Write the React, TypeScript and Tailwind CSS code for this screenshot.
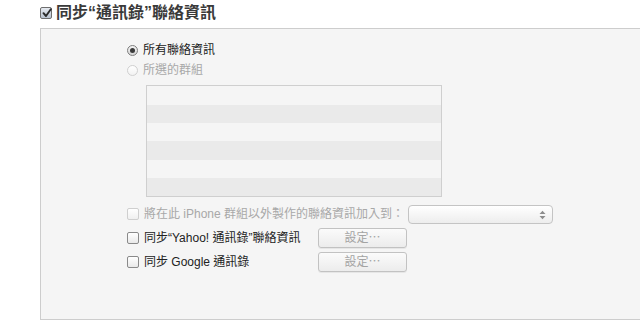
import React from "react";

const FONT = "font-['Liberation_Sans','Noto_Sans_CJK_TC',sans-serif]";

function CheckBox({ checked = false, disabled = false }: { checked?: boolean; disabled?: boolean }) {
  return (
    <span
      className={
        "relative inline-flex h-[12px] w-[12px] shrink-0 items-center justify-center rounded-[2px] border " +
        (disabled
          ? "border-[#cfcfcf] bg-gradient-to-b from-white to-[#f0f0f0]"
          : checked
          ? "border-[#6e6e6e] bg-gradient-to-b from-[#e6eaf0] to-[#b9c2cf]"
          : "border-[#8a8a8a] bg-gradient-to-b from-white to-[#e9e9e9]")
      }
    >
      {checked && (
        <svg width="10" height="10" viewBox="0 0 10 10" className="absolute left-[1px] top-[0px]">
          <path d="M1.5 5.2 L4 8 L8.8 1.2" fill="none" stroke="#2a2a2a" strokeWidth="1.9" strokeLinecap="round" strokeLinejoin="round" />
        </svg>
      )}
    </span>
  );
}

function Radio({ selected = false, disabled = false }: { selected?: boolean; disabled?: boolean }) {
  return (
    <span
      className={
        "inline-flex h-[11px] w-[11px] shrink-0 items-center justify-center rounded-full border " +
        (disabled
          ? "border-[#d0d0d0] bg-gradient-to-b from-white to-[#f2f2f2]"
          : "border-[#7d7d7d] bg-gradient-to-b from-[#f4f4f4] to-[#d5d5d5]")
      }
    >
      {selected && <span className="h-[5px] w-[5px] rounded-full bg-[#3a3a3a]" />}
    </span>
  );
}

function SetupButton() {
  return (
    <button className="flex h-[20px] w-[89px] items-center justify-center rounded-[3px] border border-[#c2c2c2] bg-gradient-to-b from-[#fbfbfb] to-[#ececec] text-[12px] text-[#a3a3a3] shadow-[0_1px_0_rgba(0,0,0,0.06)]">
      設定⋯
    </button>
  );
}

export default function App() {
  const rows = [19, 18, 18, 19, 18, 18];

  return (
    <div className={"h-[325px] w-[640px] overflow-hidden bg-white " + FONT}>
      {/* Section title */}
      <div className="flex h-[28px] items-center gap-[4px] pb-[3px] pl-[40px]">
        <CheckBox checked />
        <span className="text-[16px] font-bold leading-none text-[#3a3a3a]">同步“通訊錄”聯絡資訊</span>
      </div>

      {/* Panel */}
      <div className="ml-[40px] h-[292px] w-[610px] border border-r-0 border-[#cdcdcd] bg-[#f5f5f5] pl-[86px] pt-[11px]">
        <div className="flex h-[20px] items-center gap-[5px]">
          <Radio selected />
          <span className="text-[12px] text-[#222]">所有聯絡資訊</span>
        </div>
        <div className="flex h-[20px] items-center gap-[5px]">
          <Radio disabled />
          <span className="text-[12px] text-[#a8a8a8]">所選的群組</span>
        </div>

        {/* Group list */}
        <div className="ml-[19px] mt-[5px] w-[296px] border border-[#cfcfcf]">
          {rows.map((h, i) => (
            <div
              key={i}
              className={i % 2 === 0 ? "bg-[#f5f5f5]" : "bg-[#eaeaea]"}
              style={{ height: h }}
            />
          ))}
        </div>

        <div className="mt-[7px] flex h-[20px] items-center">
          <CheckBox disabled />
          <span className="ml-[5px] w-[264px] text-[12px] text-[#a8a8a8]">將在此 iPhone 群組以外製作的聯絡資訊加入到：</span>
          <div className="relative h-[19px] w-[145px] rounded-[4px] border border-[#c4c4c4] bg-gradient-to-b from-white to-[#ededed]">
            <svg width="7" height="10" viewBox="0 0 7 10" className="absolute right-[6px] top-[4px]">
              <path d="M0.5 4 L3.5 0.8 L6.5 4 Z" fill="#8c8c8c" />
              <path d="M0.5 6 L3.5 9.2 L6.5 6 Z" fill="#8c8c8c" />
            </svg>
          </div>
        </div>

        <div className="mt-[4px] flex h-[20px] items-center">
          <CheckBox />
          <span className="ml-[5px] w-[174px] text-[12px] text-[#222]">同步“Yahoo! 通訊錄”聯絡資訊</span>
          <SetupButton />
        </div>

        <div className="mt-[4px] flex h-[20px] items-center">
          <CheckBox />
          <span className="ml-[5px] w-[174px] text-[12px] text-[#222]">同步 Google 通訊錄</span>
          <SetupButton />
        </div>
      </div>
    </div>
  );
}
